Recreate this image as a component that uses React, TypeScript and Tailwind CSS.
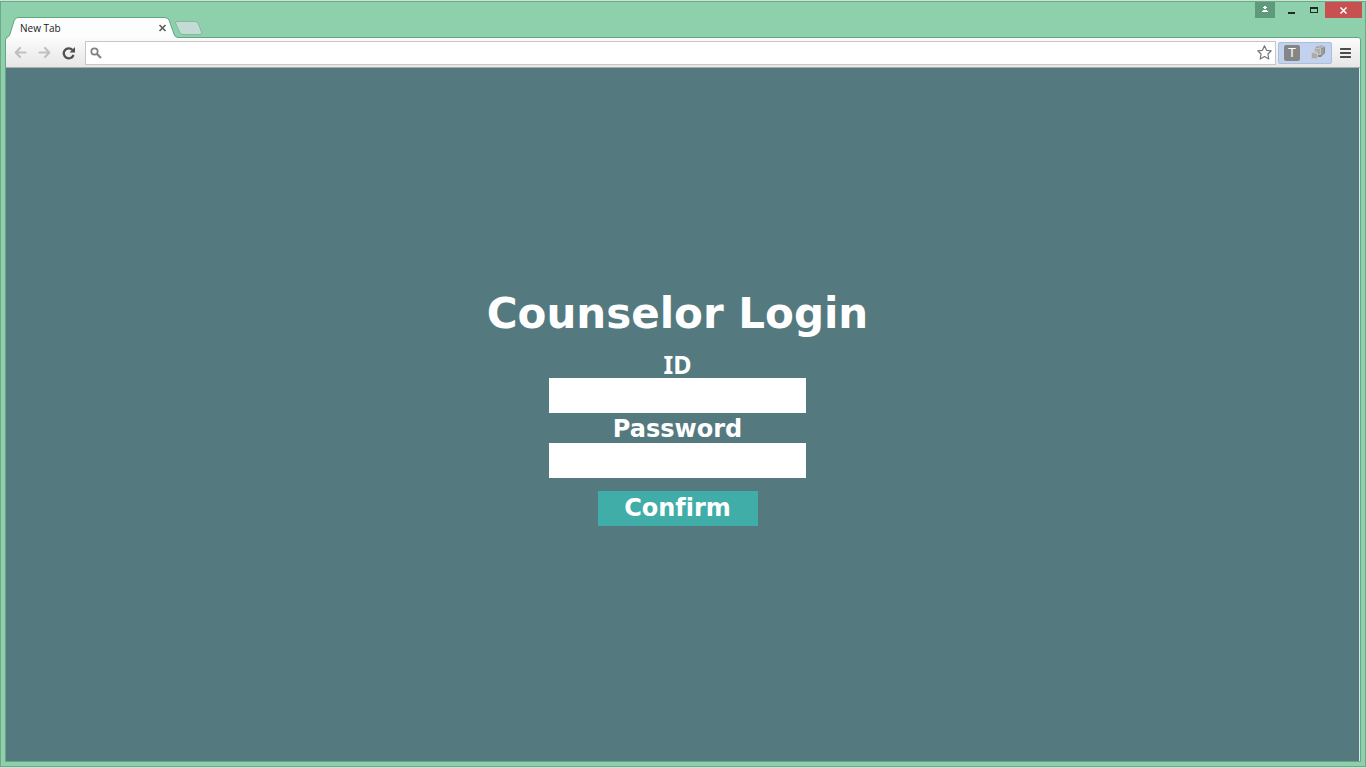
import React from "react";

function TabStrip() {
  return (
    <div className="flex h-[21px] items-end">
      <div className="relative h-[21px] w-[172px]">
        <svg className="absolute inset-0" width="172" height="21" viewBox="0 0 172 21" aria-hidden="true">
          <path d="M0 21 C3 20 3 19 4 17 L8 4 Q9 .5 12 .5 H158 Q162 .5 163 3 L168 17 Q169 20.5 172 20.5 V21 Z" fill="#fcfdfd" />
          <path d="M0 20.5 C3 20 3 19 4 17 L8 4 Q9 .5 12 .5 H158 Q162 .5 163 3 L168 17 Q169 20.5 172 20.5" fill="none" stroke="#62a682" />
        </svg>
        <div className="relative flex h-[21px] items-center justify-between pr-[11px] pl-[14px]">
          <span className="font-['Open_Sans',sans-serif] text-[10px] leading-[14px] text-[#222222]">New Tab</span>
          <button type="button" aria-label="Close tab" className="flex">
            <svg width="9" height="9" viewBox="0 0 9 9" aria-hidden="true">
              <path d="M1.5 2 7.5 8M7.5 2 1.5 8" stroke="#555b58" strokeWidth="1.5" />
            </svg>
          </button>
        </div>
      </div>
      <button type="button" aria-label="New tab" className="mb-[3px] -ml-[4px] flex">
        <svg width="29" height="14" viewBox="0 0 29 14" aria-hidden="true">
          <path d="M3 .5H21Q23.500 .5 24.500 3L27.500 11Q28 13.500 26 13.500H9Q6.500 13.500 5.500 11L1.500 2Q1 .5 3 .5Z" fill="#c3dad5" stroke="#83b99d" />
        </svg>
      </button>
    </div>
  );
}

function WindowButtons() {
  return (
    <div className="-mr-[1px] flex h-[16px] items-stretch">
      <button type="button" aria-label="User" className="flex w-[20px] items-center justify-center bg-[#5f9a7b]">
        <svg width="8" height="8" viewBox="0 0 8 8" fill="#fff" shapeRendering="crispEdges" aria-hidden="true">
          <path d="M3 0h2v1h1v1H5v1H3V2H2V1h1ZM2 4h4v1h1v1H1V5h1Z" />
        </svg>
      </button>
      <button type="button" aria-label="Minimize" className="ml-[5px] flex w-[23px] items-center justify-center">
        <svg width="9" height="9" viewBox="0 0 9 9" aria-hidden="true"><path d="M1 6h7v2H1Z" fill="#1d2b23" /></svg>
      </button>
      <button type="button" aria-label="Maximize" className="flex w-[22px] items-center justify-center">
        <svg width="8" height="8" viewBox="0 0 8 8" aria-hidden="true"><path fillRule="evenodd" d="M0 1h8v6H0ZM1 3v3h6V3Z" fill="#1d2b23" /></svg>
      </button>
      <button type="button" aria-label="Close" className="flex w-[37px] items-center justify-center bg-[#c75050]">
        <svg width="7" height="7" viewBox="0 0 7 7" aria-hidden="true"><path d="M.5 .5 6.500 6.500M6.500 .5 .5 6.500" stroke="#fff" strokeWidth="1.500" /></svg>
      </button>
    </div>
  );
}

function Toolbar() {
  return (
    <div className="flex h-[30px] items-center rounded-t-[2px] border-b border-[#a9adab] bg-linear-to-b from-[#fbfbfb] to-[#e7e7e7] pl-[8px]">
      <button type="button" aria-label="Back" className="flex">
        <svg width="13" height="13" viewBox="0 0 13 13" fill="none" stroke="#c0c0c0" strokeWidth="2.200" strokeLinejoin="round" strokeLinecap="round" aria-hidden="true"><path d="M11.500 6.500H2M6 2 1.700 6.500 6 11" /></svg>
      </button>
      <button type="button" aria-label="Forward" className="ml-[11px] flex">
        <svg width="13" height="13" viewBox="0 0 13 13" fill="none" stroke="#c0c0c0" strokeWidth="2.200" strokeLinejoin="round" strokeLinecap="round" aria-hidden="true"><path d="M1.500 6.500H11M7 2 11.300 6.500 7 11" /></svg>
      </button>
      <button type="button" aria-label="Reload" className="ml-[11px] flex">
        <svg width="14" height="14" viewBox="0 0 14 14" aria-hidden="true">
          <path d="M10.500 4A5 5 0 1 0 11.500 9" fill="none" stroke="#505050" strokeWidth="2.300" />
          <path d="M13 1V6.500H7.500Z" fill="#505050" />
        </svg>
      </button>
      <div className="ml-[9px] flex h-[24px] flex-1 items-center border border-[#c6c6c6] bg-white pr-[3px] pl-[4px]">
        <svg width="12" height="12" viewBox="0 0 12 12" fill="none" stroke="#808080" aria-hidden="true">
          <circle cx="4.500" cy="4.500" r="3.200" strokeWidth="1.700" /><path d="M7 7 11 11" strokeWidth="2.200" />
        </svg>
        <input aria-label="Address" className="h-full min-w-0 flex-1 bg-transparent px-2 font-['Open_Sans',sans-serif] text-xs outline-none" />
        <button type="button" aria-label="Bookmark" className="flex">
          <svg width="15" height="15" viewBox="0 0 15 15" aria-hidden="true"><path d="M7.500 .8 9.600 5.300 14.300 5.800 10.900 9 11.800 14 7.500 11.500 3.200 14 4.100 9 .7 5.800 5.400 5.300Z" fill="#fff" stroke="#777" strokeWidth="1.200" strokeLinejoin="round" /></svg>
        </button>
      </div>
      <div className="ml-[2px] flex h-[22px] w-[54px] items-center rounded-[2px] border border-[#a9bfdf] bg-[#c2d2ee] pl-[5px]">
        <button type="button" aria-label="Text tool" className="flex h-[16px] w-[16px] items-center justify-center rounded-[2px] bg-[#858585] font-['Liberation_Sans',sans-serif] text-[13px] leading-[16px] text-white">T</button>
        <button type="button" aria-label="Extension" className="ml-[10px] flex">
          <svg width="16" height="15" viewBox="0 0 16 15" aria-hidden="true">
            <path d="M6 2 11 .5 15 2V8L11 12H6Z" fill="#878787" />
            <path d="M6 2 11 .5 15 2 10 4Z" fill="#b4b4b4" />
            <path d="M4.500 3.500h6v6h-6Z" fill="#adadad" stroke="#c4c4c4" />
            <path d="M11 4 14 3V8L11 11Z" fill="#9c9c9c" />
            <path d="M1.500 7.500h6v6h-6Z" fill="#aaaaaa" stroke="#c7c7c7" />
            <path d="M4 6h3v3H4Z" fill="#c2c2c2" />
          </svg>
        </button>
      </div>
      <button type="button" aria-label="Menu" className="mr-[9px] ml-[8px] flex">
        <svg width="11" height="12" viewBox="0 0 11 12" fill="#4b4b4b" aria-hidden="true"><rect y="1" width="11" height="2" rx=".5" /><rect y="5" width="11" height="2" rx=".5" /><rect y="9" width="11" height="2" rx=".5" /></svg>
      </button>
    </div>
  );
}

function LoginForm() {
  return (
    <form onSubmit={(event) => event.preventDefault()} className="flex flex-col items-center font-['DejaVu_Sans',Verdana,sans-serif] text-[24px] font-bold text-white">
      <h1 className="mb-[9px] text-[42px] leading-[50px]">Counselor Login</h1>
      <label htmlFor="counselor-id" className="pt-[2px] font-['Noto_Sans',sans-serif] text-[25px] leading-[28px]">ID</label>
      <input id="counselor-id" type="text" className="h-[35px] w-[257px] bg-white px-2 text-base text-gray-800 outline-none" />
      <label htmlFor="counselor-password" className="pt-[2px] leading-[28px]">Password</label>
      <input id="counselor-password" type="password" className="h-[35px] w-[257px] bg-white px-2 text-base text-gray-800 outline-none" />
      <button type="submit" className="mt-[13px] h-[35px] w-[160px] bg-[#40ada9] pb-[2px] leading-[32px] [font-variant-ligatures:none]">Confirm</button>
    </form>
  );
}

export default function App() {
  return (
    <div className="flex min-h-screen flex-col border-y border-[#c5e7d5] bg-[#8ecfac]">
      <div className="flex flex-1 flex-col border border-[#70a78a] px-[4px] pb-[4px]">
        <header className="flex h-[35px] items-start justify-between pl-[1px]">
          <div className="pt-[15px]"><TabStrip /></div>
          <WindowButtons />
        </header>
        <div className="flex flex-1 flex-col rounded-t-[3px] border border-[#62a682]">
          <Toolbar />
          <main className="flex flex-1 flex-col items-center justify-center border-r border-[#dbe7e7] bg-[#547a80] pr-[10px] pb-[14px]">
            <LoginForm />
          </main>
        </div>
      </div>
    </div>
  );
}
